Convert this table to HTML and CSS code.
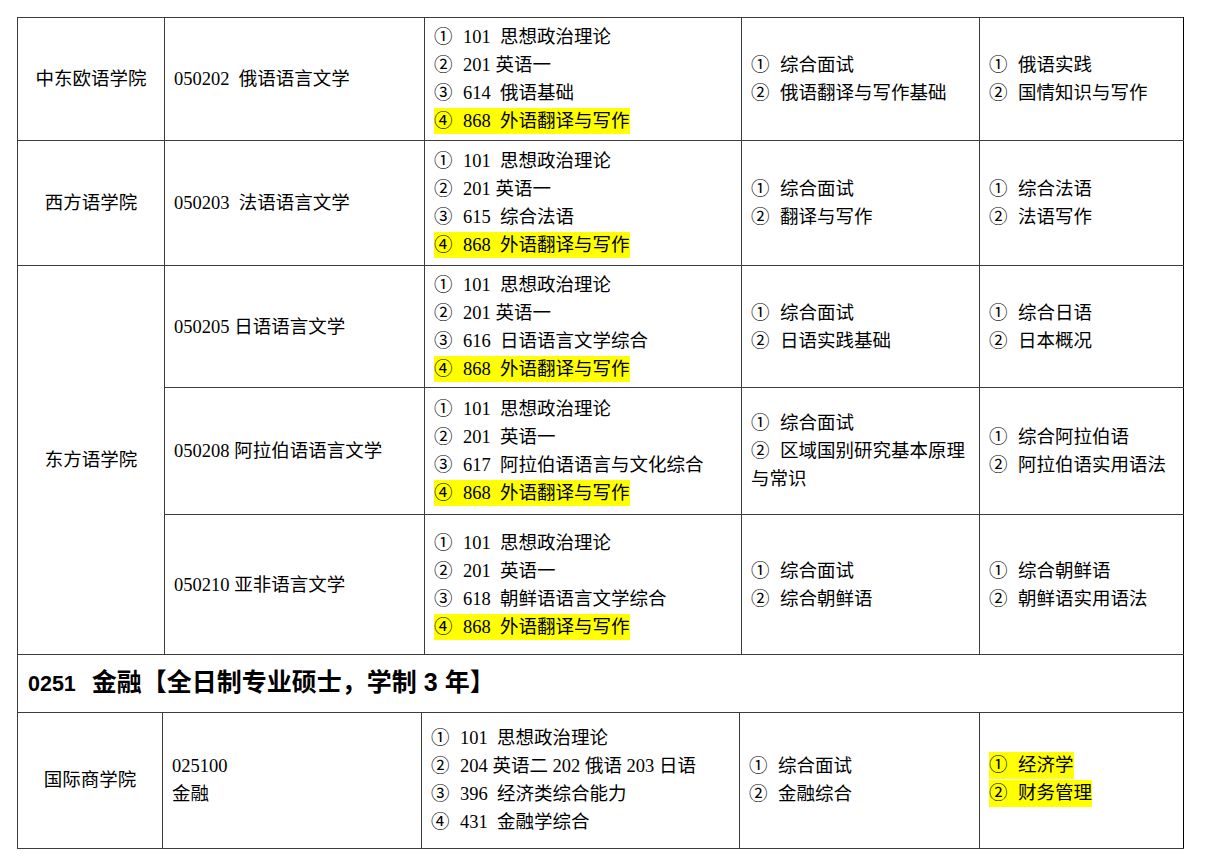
FILE: index.html
```html
<!DOCTYPE html>
<html lang="zh-CN">
<head>
<meta charset="utf-8">
<title>招生专业目录</title>
<link rel="stylesheet" href="styles.css">
</head>
<body>
<div class="page">
<table class="grid upper">
  <colgroup><col class="a1"><col class="a2"><col class="a3"><col class="a4"><col class="a5"></colgroup>
  <tr class="r1">
    <td class="college">中东欧语学院</td>
    <td class="major">050202&nbsp; 俄语语言文学</td>
    <td class="list">
      <div class="ln"><span class="n">①</span>101&nbsp; 思想政治理论</div>
      <div class="ln"><span class="n">②</span>201 英语一</div>
      <div class="ln"><span class="n">③</span>614&nbsp; 俄语基础</div>
      <div class="ln"><span class="hl"><span class="n">④</span>868&nbsp; 外语翻译与写作</span></div>
    </td>
    <td class="list">
      <div class="ln"><span class="n">①</span>综合面试</div>
      <div class="ln"><span class="n">②</span>俄语翻译与写作基础</div>
    </td>
    <td class="list last">
      <div class="ln"><span class="n">①</span>俄语实践</div>
      <div class="ln"><span class="n">②</span>国情知识与写作</div>
    </td>
  </tr>
  <tr class="r2">
    <td class="college">西方语学院</td>
    <td class="major">050203&nbsp; 法语语言文学</td>
    <td class="list">
      <div class="ln"><span class="n">①</span>101&nbsp; 思想政治理论</div>
      <div class="ln"><span class="n">②</span>201 英语一</div>
      <div class="ln"><span class="n">③</span>615&nbsp; 综合法语</div>
      <div class="ln"><span class="hl"><span class="n">④</span>868&nbsp; 外语翻译与写作</span></div>
    </td>
    <td class="list">
      <div class="ln"><span class="n">①</span>综合面试</div>
      <div class="ln"><span class="n">②</span>翻译与写作</div>
    </td>
    <td class="list last">
      <div class="ln"><span class="n">①</span>综合法语</div>
      <div class="ln"><span class="n">②</span>法语写作</div>
    </td>
  </tr>
  <tr class="r3">
    <td class="college" rowspan="3">东方语学院</td>
    <td class="major">050205 日语语言文学</td>
    <td class="list">
      <div class="ln"><span class="n">①</span>101&nbsp; 思想政治理论</div>
      <div class="ln"><span class="n">②</span>201 英语一</div>
      <div class="ln"><span class="n">③</span>616&nbsp; 日语语言文学综合</div>
      <div class="ln"><span class="hl"><span class="n">④</span>868&nbsp; 外语翻译与写作</span></div>
    </td>
    <td class="list">
      <div class="ln"><span class="n">①</span>综合面试</div>
      <div class="ln"><span class="n">②</span>日语实践基础</div>
    </td>
    <td class="list last">
      <div class="ln"><span class="n">①</span>综合日语</div>
      <div class="ln"><span class="n">②</span>日本概况</div>
    </td>
  </tr>
  <tr class="r4">
    <td class="major">050208 阿拉伯语语言文学</td>
    <td class="list">
      <div class="ln"><span class="n">①</span>101&nbsp; 思想政治理论</div>
      <div class="ln"><span class="n">②</span>201&nbsp; 英语一</div>
      <div class="ln"><span class="n">③</span>617&nbsp; 阿拉伯语语言与文化综合</div>
      <div class="ln"><span class="hl"><span class="n">④</span>868&nbsp; 外语翻译与写作</span></div>
    </td>
    <td class="list">
      <div class="ln"><span class="n">①</span>综合面试</div>
      <div class="ln"><span class="n">②</span>区域国别研究基本原理</div>
      <div class="ln">与常识</div>
    </td>
    <td class="list last">
      <div class="ln"><span class="n">①</span>综合阿拉伯语</div>
      <div class="ln"><span class="n">②</span>阿拉伯语实用语法</div>
    </td>
  </tr>
  <tr class="r5">
    <td class="major">050210 亚非语言文学</td>
    <td class="list">
      <div class="ln"><span class="n">①</span>101&nbsp; 思想政治理论</div>
      <div class="ln"><span class="n">②</span>201&nbsp; 英语一</div>
      <div class="ln"><span class="n">③</span>618&nbsp; 朝鲜语语言文学综合</div>
      <div class="ln"><span class="hl"><span class="n">④</span>868&nbsp; 外语翻译与写作</span></div>
    </td>
    <td class="list">
      <div class="ln"><span class="n">①</span>综合面试</div>
      <div class="ln"><span class="n">②</span>综合朝鲜语</div>
    </td>
    <td class="list last">
      <div class="ln"><span class="n">①</span>综合朝鲜语</div>
      <div class="ln"><span class="n">②</span>朝鲜语实用语法</div>
    </td>
  </tr>
</table>
<table class="grid lower">
  <colgroup><col class="b1"><col class="b2"><col class="b3"><col class="b4"><col class="b5"></colgroup>
  <tr class="r6">
    <td class="section last" colspan="5"><span class="code">0251</span><span class="gap"></span>金融【全日制专业硕士，学制 3 年】</td>
  </tr>
  <tr class="r7">
    <td class="college">国际商学院</td>
    <td class="major">
      <div class="ln">025100</div>
      <div class="ln">金融</div>
    </td>
    <td class="list">
      <div class="ln"><span class="n">①</span>101&nbsp; 思想政治理论</div>
      <div class="ln"><span class="n">②</span>204 英语二 202 俄语 203 日语</div>
      <div class="ln"><span class="n">③</span>396&nbsp; 经济类综合能力</div>
      <div class="ln"><span class="n">④</span>431&nbsp; 金融学综合</div>
    </td>
    <td class="list">
      <div class="ln"><span class="n">①</span>综合面试</div>
      <div class="ln"><span class="n">②</span>金融综合</div>
    </td>
    <td class="list last">
      <div class="ln"><span class="hl tall"><span class="n">①</span>经济学</span></div>
      <div class="ln"><span class="hl tall"><span class="n">②</span>财务管理</span></div>
    </td>
  </tr>
</table>
</div>
</body>
</html>
```
FILE: styles.css
```css
html, body {
  margin: 0;
  padding: 0;
  background: #ffffff;
}

body {
  color: #000000;
  font-family: "Liberation Serif", "Noto Sans CJK SC", serif;
  font-size: 18.5px;
}

.page {
  padding: 17px 0 0 17px;
}

.grid {
  border-collapse: collapse;
  table-layout: fixed;
  width: 1166px;
}

.grid td {
  border: 1px solid #3c3c3c;
  padding: 0 9px;
  vertical-align: middle;
  white-space: nowrap;
  line-height: 28px;
  text-align: left;
}

.grid td.last {
  border-right-color: #000000;
}

.a1 { width: 147px; }
.a2 { width: 260px; }
.a3 { width: 317px; }
.a4 { width: 238px; }
.a5 { width: 204px; }

.b1 { width: 145px; }
.b2 { width: 259px; }
.b3 { width: 318px; }
.b4 { width: 240px; }
.b5 { width: 204px; }

.r1 { height: 123px; }
.r2 { height: 125px; }
.r3 { height: 122px; }
.r4 { height: 127px; }
.r5 { height: 140px; }
.r6 { height: 57px; }
.r7 { height: 136px; }

.lower tr.r6 td {
  border-top: none;
}

.grid td.college {
  text-align: center;
  padding: 0;
}

.ln {
  height: 28px;
  line-height: 28px;
}

.n {
  display: inline-block;
  width: 29px;
}

.hl {
  display: inline-block;
  vertical-align: top;
  margin-top: 1px;
  line-height: 26px;
  height: 26px;
  background: #ffff00;
}

.hl.tall {
  margin-top: 0;
  height: 27px;
  line-height: 27px;
}

.grid td.section {
  font-family: "Liberation Sans", "Noto Sans CJK SC", sans-serif;
  font-weight: bold;
  font-size: 25px;
  padding-left: 10px;
}

.section .code {
  font-size: 21.5px;
}

.section .gap {
  display: inline-block;
  width: 16px;
}
```
